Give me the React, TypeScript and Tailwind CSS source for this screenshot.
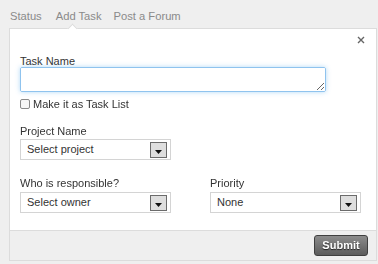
import React from 'react';

const SelectBox: React.FC<{ value: string; className?: string }> = ({ value, className }) => (
  <div className={`relative flex h-[21px] w-[151px] items-center border border-[#d4d4d4] bg-white pl-[6px] text-[11px] text-[#333] ${className || ''}`}>
    <span>{value}</span>
    <span className="absolute right-[3px] top-[2px] flex h-[16px] w-[17px] items-end justify-center border border-[#6b6b6b] bg-[#dedede] pb-[3px]">
      <svg width="7" height="4" viewBox="0 0 7 4">
        <path d="M0 0h7L3.5 4z" fill="#111" />
      </svg>
    </span>
  </div>
);

const CloseIcon: React.FC = () => (
  <svg width="8" height="8" viewBox="0 0 8 8" className="text-[#666]">
    <path d="M1 1l6 6M7 1L1 7" stroke="currentColor" strokeWidth="1.4" />
  </svg>
);

export default function App() {
  return (
    <div className="h-[264px] w-[378px] overflow-hidden bg-[#efefef] font-['Liberation_Sans',Arial,sans-serif]">
      {/* tabs */}
      <div className="flex h-[28px] items-start pt-[9px] text-[11.2px] leading-[14px] text-[#8a8a8a]">
        <span className="ml-[10px]">Status</span>
        <span className="ml-[14px]">Add Task</span>
        <span className="ml-[12px]">Post a Forum</span>
      </div>

      {/* panel */}
      <div className="relative ml-[9px] h-[233px] w-[368px] border border-[#dcdcdc] bg-white">
        <span className="absolute left-[59px] top-[-4px] h-[7px] w-[7px] rotate-45 border-l border-t border-[#dcdcdc] bg-white" />
        <button className="absolute right-[11px] top-[7px] p-0">
          <CloseIcon />
        </button>

        <div className="flex h-[201px] flex-col pl-[10px] pt-[26px]">
          <label className="h-[12px] text-[11px] leading-[12px] text-[#333]">Task Name</label>
          <textarea
            className="mt-0 h-[25px] w-[306px] resize rounded-[2px] border border-[#8fc3ee] bg-white shadow-[0_0_5px_rgba(82,168,236,0.45)] outline-none"
            defaultValue=""
          />
          <div className="mt-[6px] flex h-[12px] items-center text-[11px] text-[#333]">
            <span className="h-[10px] w-[10px] rounded-[2px] border border-[#8a8a8a] bg-[#f6f6f6]" />
            <span className="ml-[3px]">Make it as Task List</span>
          </div>

          <label className="mt-[15px] h-[12px] text-[11px] leading-[12px] text-[#333]">Project Name</label>
          <SelectBox value="Select project" className="mt-[2px]" />

          <div className="mt-[17px] flex">
            <div className="w-[190px]">
              <label className="block h-[12px] text-[11px] leading-[12px] text-[#333]">Who is responsible?</label>
              <SelectBox value="Select owner" className="mt-[3px]" />
            </div>
            <div>
              <label className="block h-[12px] text-[11px] leading-[12px] text-[#333]">Priority</label>
              <SelectBox value="None" className="mt-[3px]" />
            </div>
          </div>
        </div>

        {/* footer */}
        <div className="flex h-[30px] items-start justify-end border-t border-[#dcdcdc] bg-[#efefef] pr-[8px] pt-[4px]">
          <button className="h-[21px] w-[54px] rounded-[3px] border border-[#3f3f3f] bg-gradient-to-b from-[#8c8c8c] to-[#5c5c5c] text-[11px] font-bold text-white [text-shadow:0_1px_1px_#222]">
            Submit
          </button>
        </div>
      </div>
    </div>
  );
}
